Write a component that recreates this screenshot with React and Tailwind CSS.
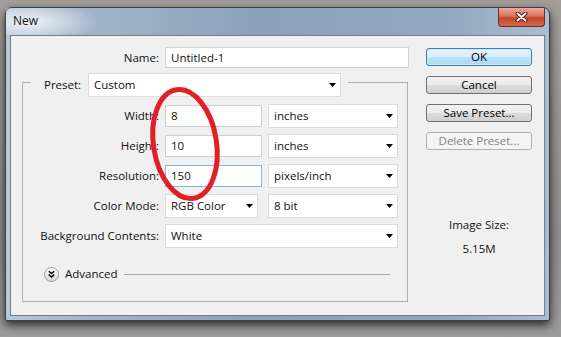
import React from 'react';

// small black dropdown triangle
const Arrow = () => (
  <svg width="7" height="4" viewBox="0 0 7 4">
    <path d="M0 0H7L3.5 4Z" fill="#000" />
  </svg>
);

const Select = ({ w, children }) => (
  <div className={`${w} h-[24px] bg-white border border-[#dcdcdc] flex items-center justify-between pl-[5px] pr-[4px]`}>
    <span className="leading-none">{children}</span>
    <Arrow />
  </div>
);

const Input = ({ w, focused, children }) => (
  <div
    className={`${w} h-[22px] bg-white border flex items-center pl-[5px] ${
      focused ? 'border-[#84b7e7]' : 'border-[#d0d0d0]'
    }`}
  >
    <span className="leading-none">{children}</span>
  </div>
);

const Button = ({ kind, children }) => {
  let look = 'border-[#707070] bg-[linear-gradient(#f2f2f2_0%,#ebebeb_50%,#dddddd_51%,#cfcfcf_100%)] text-black';
  if (kind === 'default') {
    look = 'border-[#3c7fb1] bg-[linear-gradient(#e5f4fc_0%,#d4ecfa_50%,#bde3f7_51%,#a9d8f2_100%)] text-black shadow-[inset_0_0_0_1px_#cfe9f8]';
  }
  if (kind === 'disabled') {
    look = 'border-[#adb2b5] bg-[#f4f4f4] text-[#838383]';
  }
  return (
    <div className={`w-[106px] h-[18px] rounded-[3px] border flex items-center justify-center leading-none ${look}`}>
      {children}
    </div>
  );
};

const Row = ({ label, first, children }) => (
  <div className={`flex items-center h-[24px] ${first ? 'mt-[7px]' : 'mt-[6px]'}`}>
    <span className="w-[136px] text-right leading-none">{label}</span>
    <div className="ml-[6px] flex items-center gap-[6px]">{children}</div>
  </div>
);

const AdvancedIcon = () => (
  <svg width="15" height="15" viewBox="0 0 15 15">
    <defs>
      <linearGradient id="adv" x1="0" y1="0" x2="0" y2="1">
        <stop offset="0" stopColor="#ffffff" />
        <stop offset="1" stopColor="#d8d8d8" />
      </linearGradient>
    </defs>
    <circle cx="7.5" cy="7.5" r="7" fill="url(#adv)" stroke="#9c9c9c" />
    <path d="M4.8 4.2L7.5 6.6L10.2 4.2M4.8 7.6L7.5 10L10.2 7.6" stroke="#000" strokeWidth="1.5" fill="none" />
  </svg>
);

const CloseX = () => (
  <svg width="13" height="10" viewBox="0 0 13 10">
    <path d="M2.5 1.5L10.5 8.5M10.5 1.5L2.5 8.5" stroke="#4a2019" strokeWidth="4" strokeLinecap="round" />
    <path d="M2.5 1.5L10.5 8.5M10.5 1.5L2.5 8.5" stroke="#ffffff" strokeWidth="2" strokeLinecap="round" />
  </svg>
);

export default function App() {
  return (
    <div className="relative w-[561px] h-[337px] overflow-hidden bg-[linear-gradient(#a39e9a,#8d8d8d_70%,#9c9c9c)] pt-[7px] pl-[5px] text-[11.5px] text-[#111] [font-family:'Open_Sans',sans-serif]">
      {/* window */}
      <div className="w-[545px] h-[314px] rounded-t-[7px] rounded-b-[2px] border border-[#36414e] bg-[linear-gradient(90deg,#b7c8d9,#a2b5ca_15%,#8ca2bb_45%,#91a7bf_80%,#aabdd1)] flex flex-col shadow-[0_4px_10px_rgba(0,0,0,0.75)]">
        {/* title bar */}
        <div className="h-[27px] flex justify-between items-start pl-[7px] bg-[radial-gradient(ellipse_70px_20px_at_22px_14px,rgba(240,245,250,0.95),rgba(240,245,250,0))]">
          <span className="mt-[6px] leading-[14px] text-[12px] text-[#141414]">New</span>
          <div className="mr-[4px] w-[47px] h-[19px] rounded-b-[4px] border border-t-0 border-[#6d2d22] bg-[linear-gradient(#eba899_0%,#d9735f_45%,#c4432b_55%,#d5694d_100%)] flex items-center justify-center">
            <CloseX />
          </div>
        </div>

        {/* client area */}
        <div className="mx-[4px] mb-[4px] flex-1 bg-[#f0f0f0] border border-[#6f8093] flex">
          {/* left column */}
          <div className="w-[415px] flex flex-col">
            <div className="mt-[11px] flex items-center h-[21px]">
              <span className="w-[148px] text-right leading-none">Name:</span>
              <div className="ml-[6px] w-[244px] h-[21px] bg-white border border-[#d4d4d4] flex items-center pl-[5px]">
                <span className="leading-none">Untitled-1</span>
              </div>
            </div>

            {/* preset group box */}
            <div className="ml-[11px] mt-[14px] w-[386px] h-[220px] border border-[#b0b0b0] flex flex-col">
              <div className="-mt-[10px] ml-[8px] flex items-center h-[24px]">
                <span className="w-[57px] h-full pl-[13px] bg-[#f0f0f0] flex items-center leading-none">Preset:</span>
                <Select w="w-[253px]">Custom</Select>
                <span className="w-[7px] h-full bg-[#f0f0f0]" />
              </div>

              <Row label="Width:" first>
                <Input w="w-[97px]">8</Input>
                <Select w="w-[130px]">inches</Select>
              </Row>
              <Row label="Height:">
                <Input w="w-[97px]">10</Input>
                <Select w="w-[130px]">inches</Select>
              </Row>
              <Row label="Resolution:">
                <Input w="w-[97px]" focused>150</Input>
                <Select w="w-[130px]">pixels/inch</Select>
              </Row>
              <Row label="Color Mode:">
                <Select w="w-[93px]">RGB Color</Select>
                <div className="ml-[4px]">
                  <Select w="w-[130px]">8 bit</Select>
                </div>
              </Row>
              <Row label="Background Contents:">
                <Select w="w-[233px]">White</Select>
              </Row>

              <div className="mt-[18px] h-[16px] flex items-center pl-[21px] pr-[17px]">
                <AdvancedIcon />
                <span className="ml-[6px] leading-none">Advanced</span>
                <span className="ml-[6px] flex-1 h-px bg-[#a8a8a8]" />
              </div>
            </div>
          </div>

          {/* right column */}
          <div className="w-[106px] flex flex-col pt-[12px]">
            <div className="flex flex-col gap-[10px]">
              <Button kind="default">OK</Button>
              <Button>Cancel</Button>
              <Button>Save Preset...</Button>
              <Button kind="disabled">Delete Preset...</Button>
            </div>
            <div className="mt-[67px] text-center leading-[16px]">Image Size:</div>
            <div className="mt-[8px] text-center leading-[16px]">5.15M</div>
          </div>
        </div>
      </div>

      {/* red marker annotation */}
      <svg className="absolute left-0 top-0 pointer-events-none" width="561" height="337">
        <ellipse
          cx="185"
          cy="144"
          rx="31.5"
          ry="55"
          transform="rotate(-9 185 144)"
          fill="none"
          stroke="#e21f27"
          strokeWidth="5"
        />
      </svg>
    </div>
  );
}
